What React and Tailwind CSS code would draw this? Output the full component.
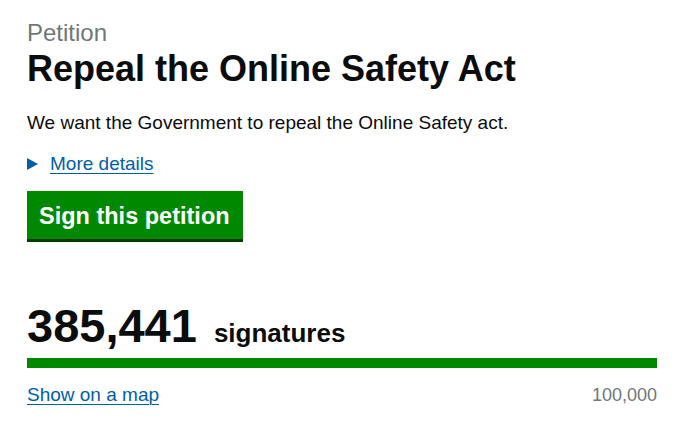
export default function App() {
  return (
    <div
      className="w-[684px] h-[432px] bg-white px-[27px] pt-[19px] text-[#0b0c0c]"
      style={{ fontFamily: '"Liberation Sans", Arial, Helvetica, sans-serif' }}
    >
      <p className="text-[24px] leading-[28px] text-[#6f777b]">Petition</p>
      <h1 className="mt-[2px] text-[36px] leading-[40px] font-bold">
        Repeal the Online Safety Act
      </h1>
      <p className="mt-[22px] text-[19px] leading-[24px]">
        We want the Government to repeal the Online Safety act.
      </p>
      <div className="mt-[17px] flex items-center text-[19px] leading-[24px] text-[#005ea5]">
        <svg width="11" height="12" viewBox="0 0 11 12" className="shrink-0">
          <polygon points="0,0 11,6 0,12" fill="#005ea5" />
        </svg>
        <a href="#" className="ml-[12px] underline underline-offset-[3px] decoration-1">
          More details
        </a>
      </div>
      <button className="mt-[15px] block h-[51px] bg-[#008800] border-b-[3px] border-[#003b00] pl-3 pr-[13px] text-left text-white font-bold text-[23.5px] leading-[50px]">
        Sign this petition
      </button>
      <div className="mt-[58px] flex items-baseline gap-[17px]">
        <span className="text-[47px] leading-[52px] font-bold">385,441</span>
        <span className="text-[26px] font-bold">signatures</span>
      </div>
      <div className="mt-[5px] h-[10px] w-full bg-[#008800]"></div>
      <div className="mt-[15px] flex items-baseline justify-between">
        <a href="#" className="text-[19px] leading-[24px] text-[#005ea5] underline underline-offset-[3px] decoration-1">
          Show on a map
        </a>
        <span className="text-[18px] leading-[24px] text-[#6f777b]">100,000</span>
      </div>
    </div>
  );
}
